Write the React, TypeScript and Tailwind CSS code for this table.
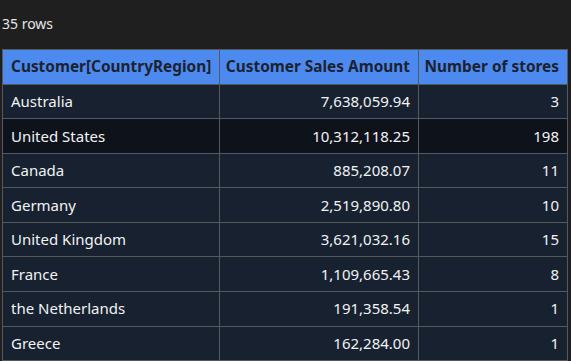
import React from "react";

const rows: [string, string, string][] = [
  ["Australia", "7,638,059.94", "3"],
  ["United States", "10,312,118.25", "198"],
  ["Canada", "885,208.07", "11"],
  ["Germany", "2,519,890.80", "10"],
  ["United Kingdom", "3,621,032.16", "15"],
  ["France", "1,109,665.43", "8"],
  ["the Netherlands", "191,358.54", "1"],
  ["Greece", "162,284.00", "1"],
];

export default function App() {
  return (
    <div
      className="w-[571px] h-[361px] overflow-hidden bg-[#1f1f1f] text-[#f1f3f5]"
      style={{ fontFamily: '"Noto Sans", "Open Sans", sans-serif' }}
    >
      <div className="h-[49px] pl-[2px] pt-[14px] text-[14px] leading-[20px] text-[#e6e6e6]">35 rows</div>
      <div className="ml-[2px] w-[566px] bg-[#55585d] p-px grid grid-cols-[216px_198px_148px] auto-rows-[33.57px] gap-px">
        <div className="bg-[#4d8af0] font-bold text-[#1c2230] text-[15.4px] flex items-center px-[8px] whitespace-nowrap">Customer[CountryRegion]</div>
        <div className="bg-[#4d8af0] font-bold text-[#1c2230] text-[15.4px] flex items-center justify-end px-[8px] whitespace-nowrap">Customer Sales Amount</div>
        <div className="bg-[#4d8af0] font-bold text-[#1c2230] text-[15.4px] flex items-center justify-end px-[8px] whitespace-nowrap">Number of stores</div>
        {rows.map((r, i) => {
          const bg = i === 1 ? "bg-[#0e131b]" : "bg-[#172130]";
          return (
            <React.Fragment key={i}>
              <div className={`${bg} text-[15px] flex items-center px-[8px] whitespace-nowrap`}>{r[0]}</div>
              <div className={`${bg} text-[15px] flex items-center justify-end px-[8px] whitespace-nowrap`}>{r[1]}</div>
              <div className={`${bg} text-[15px] flex items-center justify-end px-[8px] whitespace-nowrap`}>{r[2]}</div>
            </React.Fragment>
          );
        })}
      </div>
    </div>
  );
}
